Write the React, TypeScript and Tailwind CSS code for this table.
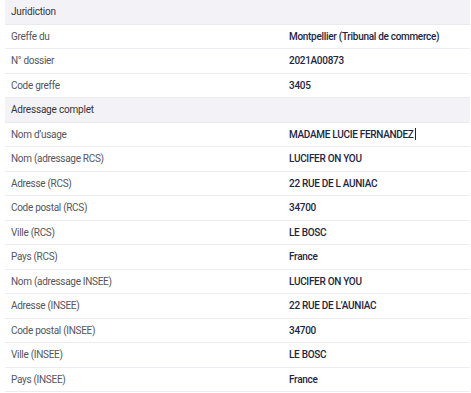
import React from "react";

type Row = { type: "header"; label: string } | { type: "row"; label: string; value: string; caret?: boolean };

const rows: Row[] = [
  { type: "header", label: "Juridiction" },
  { type: "row", label: "Greffe du", value: "Montpellier (Tribunal de commerce)" },
  { type: "row", label: "N° dossier", value: "2021A00873" },
  { type: "row", label: "Code greffe", value: "3405" },
  { type: "header", label: "Adressage complet" },
  { type: "row", label: "Nom d’usage", value: "MADAME LUCIE FERNANDEZ", caret: true },
  { type: "row", label: "Nom (adressage RCS)", value: "LUCIFER ON YOU" },
  { type: "row", label: "Adresse (RCS)", value: "22 RUE DE L AUNIAC" },
  { type: "row", label: "Code postal (RCS)", value: "34700" },
  { type: "row", label: "Ville (RCS)", value: "LE BOSC" },
  { type: "row", label: "Pays (RCS)", value: "France" },
  { type: "row", label: "Nom (adressage INSEE)", value: "LUCIFER ON YOU" },
  { type: "row", label: "Adresse (INSEE)", value: "22 RUE DE L’AUNIAC" },
  { type: "row", label: "Code postal (INSEE)", value: "34700" },
  { type: "row", label: "Ville (INSEE)", value: "LE BOSC" },
  { type: "row", label: "Pays (INSEE)", value: "France" },
];

export default function App() {
  return (
    <div
      className="w-[471px] h-[393px] bg-white overflow-hidden pl-[5px] pr-[1px]"
      style={{ fontFamily: "Roboto, 'Noto Sans', sans-serif" }}
    >
      <div className="flex flex-col">
        {rows.map((r, i) =>
          r.type === "header" ? (
            <div
              key={i}
              className="h-[24.5px] flex items-center bg-[#f3f3f7] border-b border-[#e9e9ee] pl-[6px] text-[10px] tracking-[-0.2px] text-[#34343c]"
            >
              {r.label}
            </div>
          ) : (
            <div
              key={i}
              className="h-[24.5px] flex items-center border-b border-[#ececf1] text-[10px] tracking-[-0.3px]"
            >
              <div className="w-[284px] pl-[6px] text-[#55555d]">{r.label}</div>
              <div className="flex items-center text-[#1e2643] font-medium">
                {r.value}
                {r.caret && <span className="inline-block w-[1px] h-[12px] bg-[#222] ml-[1px]" />}
              </div>
            </div>
          )
        )}
      </div>
    </div>
  );
}
